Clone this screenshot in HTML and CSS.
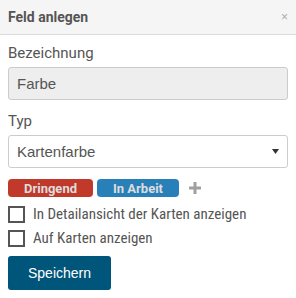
FILE: index.html
```html
<!DOCTYPE html>
<html lang="de">
<head>
  <meta charset="utf-8">
  <title>Feld anlegen</title>
  <link rel="stylesheet" href="styles.css">
</head>
<body>
  <div class="dialog">
    <div class="dialog-header">
      <h3 class="dialog-title">Feld anlegen</h3>
      <button class="close" type="button">&times;</button>
    </div>
    <form class="dialog-body">
      <label class="field-label" for="name">Bezeichnung</label>
      <input class="input input-disabled" id="name" type="text" value="Farbe" disabled>

      <label class="field-label" for="type">Typ</label>
      <div class="select" id="type">
        <span class="select-value">Kartenfarbe</span>
        <svg class="select-arrow" width="7" height="5" viewBox="0 0 7 5">
          <path d="M0 0H7L3.5 5Z" fill="#333333"/>
        </svg>
      </div>

      <div class="tags">
        <span class="tag tag-red">Dringend</span>
        <span class="tag tag-blue">In Arbeit</span>
        <svg class="tag-add" width="12" height="12" viewBox="0 0 12 12">
          <path d="M4.5 0H7.5V4.5H12V7.5H7.5V12H4.5V7.5H0V4.5H4.5Z" fill="#A0A0A0"/>
        </svg>
      </div>

      <label class="check">
        <span class="check-box"></span>
        <span class="check-title">In Detailansicht der Karten anzeigen</span>
      </label>
      <label class="check">
        <span class="check-box"></span>
        <span class="check-title">Auf Karten anzeigen</span>
      </label>

      <button class="button" type="button">Speichern</button>
    </form>
  </div>
</body>
</html>
```

FILE: styles.css
```css
*, *::before, *::after {
  margin: 0;
  padding: 0;
  box-sizing: border-box;
}

body {
  background-color: #FFFFFF;
  color: #555555;
  font-family: "Roboto", sans-serif;
}

.dialog {
  width: 296px;
}

.dialog-header {
  display: flex;
  align-items: center;
  justify-content: space-between;
  height: 35px;
  padding: 0 8px 0 8px;
  background-color: #F5F5F5;
  border-bottom: 1px solid #DDDDDD;
}

.dialog-title {
  font-size: 14px;
  font-weight: 700;
  color: #555555;
}

.close {
  border: none;
  background: none;
  color: #AAAAAA;
  font-size: 12px;
  font-family: "Liberation Sans", sans-serif;
  line-height: 1;
}

.dialog-body {
  display: flex;
  flex-direction: column;
  padding: 9px 8px;
}

.field-label {
  font-size: 15px;
  font-stretch: 95%;
  line-height: 18px;
  margin-bottom: 5px;
}

.input, .select {
  height: 33px;
  border: 1px solid #CCCCCC;
  border-radius: 3px;
  padding: 0 8px;
  font-size: 15px;
  font-family: "Liberation Sans", sans-serif;
  color: #555555;
  margin-bottom: 12px;
}

.input-disabled {
  background-color: #EEEEEE;
}

.select {
  display: flex;
  align-items: center;
  justify-content: space-between;
  margin-bottom: 11px;
}

.tags {
  display: flex;
  align-items: center;
  gap: 4px;
  margin-bottom: 5px;
}

.tag {
  display: flex;
  align-items: center;
  justify-content: center;
  height: 18px;
  border-radius: 4px;
  color: #DDDDDD;
  font-size: 13px;
  font-weight: 700;
  line-height: 1;
}

.tag-red {
  width: 85px;
  background-color: #C0392B;
}

.tag-blue {
  width: 82px;
  background-color: #2980B9;
}

.tag-add {
  margin-left: 6px;
}

.check {
  display: flex;
  align-items: center;
  height: 24px;
}

.check-box {
  width: 17px;
  height: 17px;
  border: 2px solid #555555;
  margin-right: 8px;
}

.check-title {
  font-size: 15px;
  font-stretch: 83%;
}

.button {
  align-self: flex-start;
  margin-top: 6px;
  width: 103px;
  height: 34px;
  border: none;
  border-radius: 3px;
  background-color: #00557A;
  color: #FFFFFF;
  font-size: 14px;
  font-family: "Liberation Sans", sans-serif;
}
```
